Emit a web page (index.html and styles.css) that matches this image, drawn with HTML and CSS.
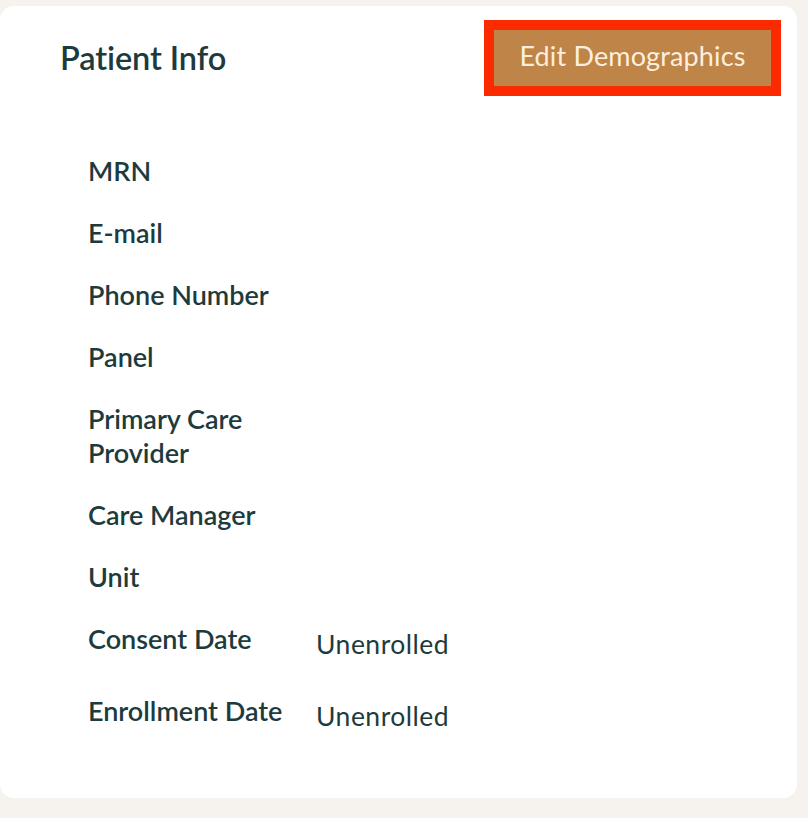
FILE: index.html
```html
<!DOCTYPE html>
<html lang="en">
<head>
<meta charset="utf-8">
<title>Patient Info</title>
<link rel="stylesheet" href="styles.css">
</head>
<body>
<section class="card">
  <header class="card-header">
    <h1 class="title">Patient Info</h1>
    <div class="highlight">
      <button class="btn-edit" type="button">Edit Demographics</button>
    </div>
  </header>
  <dl class="info">
    <dt class="label">MRN</dt><dd class="value"></dd>
    <dt class="label">E-mail</dt><dd class="value"></dd>
    <dt class="label">Phone Number</dt><dd class="value"></dd>
    <dt class="label">Panel</dt><dd class="value"></dd>
    <dt class="label">Primary Care Provider</dt><dd class="value"></dd>
    <dt class="label">Care Manager</dt><dd class="value"></dd>
    <dt class="label">Unit</dt><dd class="value"></dd>
    <dt class="label">Consent Date</dt><dd class="value">Unenrolled</dd>
    <dt class="label">Enrollment Date</dt><dd class="value">Unenrolled</dd>
  </dl>
</section>
</body>
</html>
```

FILE: styles.css
```css
html, body {
  margin: 0;
  padding: 0;
}
body {
  background: #f6f3ef;
  font-family: "Lato", "Liberation Sans", sans-serif;
  color: #1d3b3d;
  padding: 6px 11px 20px 0;
  box-sizing: border-box;
  min-height: 818px;
}
.card {
  background: #ffffff;
  border-radius: 14px;
  padding: 14px 16px 58px 60px;
  box-sizing: border-box;
  height: 792px;
}
.card-header {
  display: flex;
  justify-content: space-between;
  align-items: center;
  height: 76px;
}
.title {
  margin: 0;
  font-size: 32.5px;
  font-weight: 600;
  line-height: 40px;
  letter-spacing: -0.1px;
}
.highlight {
  border: 10px solid #fb2a00;
}
.btn-edit {
  display: block;
  width: 277px;
  height: 56px;
  border: none;
  margin: 0;
  background: #bf8447;
  color: #fcefdf;
  font-family: "Lato", "Liberation Sans", sans-serif;
  font-size: 27px;
  font-weight: 400;
  letter-spacing: 0.15px;
  padding: 0 0 6px 0;
  text-align: center;
}
.info {
  display: grid;
  grid-template-columns: 210px auto;
  column-gap: 18px;
  row-gap: 28px;
  margin: 58px 0 0 28px;
  align-items: start;
}
.label {
  margin: 0;
  font-size: 27px;
  font-weight: 600;
  line-height: 34px;
  letter-spacing: 0;
}
.value {
  margin: 0;
  font-size: 26.5px;
  font-weight: 400;
  line-height: 44px;
  letter-spacing: 0.5px;
}
```
